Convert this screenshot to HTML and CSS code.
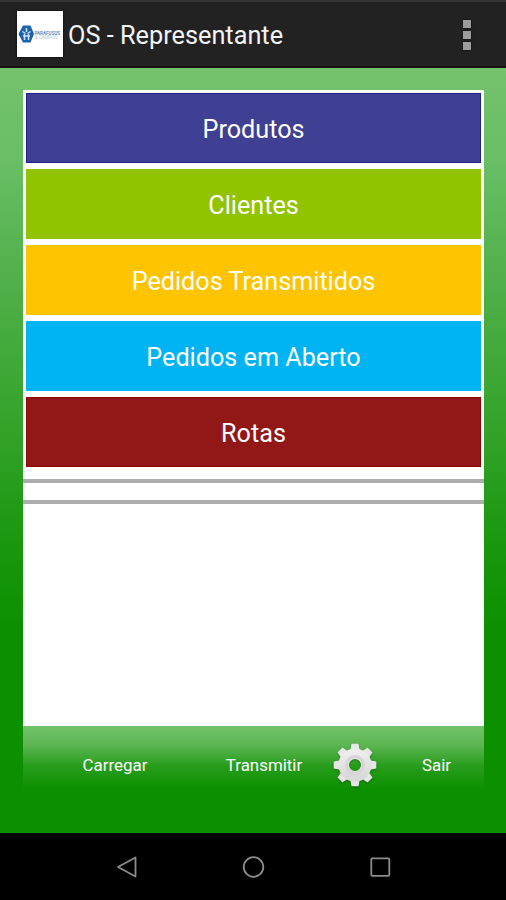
FILE: index.html
```
<!DOCTYPE html>
<html lang="pt-BR">
<head>
    <meta charset="UTF-8">
    <meta name="viewport" content="width=device-width, initial-scale=1.0">
    <title>OS - Representante</title>
    <link rel="stylesheet" href="styles.css">
</head>
<body>
    <header class="action-bar">
        <svg class="logo" viewBox="0 0 46 46">
            <rect width="46" height="46" fill="#fff"/>
            <path d="M6 14.500h7.500L17 23l-3.500 8.500H6L1.500 23z" fill="#1c63ad"/>
            <path d="M9.500 17v4M5.500 20.500l3 2M13.500 20.500l-3 2M7.500 23v6M11.500 23v6M6 25h7" stroke="#cfe3f5" stroke-width="1.500" fill="none"/>
            <text class="logo-name" x="17.500" y="23.500">PARAFUSOS</text>
            <text class="logo-sub" x="18" y="28">&amp; CAMPOS</text>
        </svg>
        <h1>OS - Representante</h1>
        <button class="overflow" aria-label="Menu">
            <span></span>
            <span></span>
            <span></span>
        </button>
    </header>

    <main class="screen">
        <div class="panel">
            <nav class="menu">
                <button class="produtos">Produtos</button>
                <button class="clientes">Clientes</button>
                <button class="transmitidos">Pedidos Transmitidos</button>
                <button class="aberto">Pedidos em Aberto</button>
                <button class="rotas">Rotas</button>
            </nav>
            <hr>
            <hr>
        </div>
        <div class="toolbar">
            <button class="carregar">Carregar</button>
            <button class="transmitir">Transmitir</button>
            <button class="config" aria-label="Configurações">
                <svg class="gear" viewBox="-22 -22 44 44">
                    <defs>
                        <linearGradient id="metal" x1="0" y1="0" x2="0" y2="1">
                            <stop offset="0" stop-color="#ececec"/>
                            <stop offset="1" stop-color="#dadada"/>
                        </linearGradient>
                        <path id="tooth" d="M-5-13L-3.500-21.300h7L5-13z"/>
                    </defs>
                    <g fill="#e6e6e6">
                        <use href="#tooth"/>
                        <use href="#tooth" transform="rotate(45)"/>
                        <use href="#tooth" transform="rotate(90)"/>
                        <use href="#tooth" transform="rotate(135)"/>
                        <use href="#tooth" transform="rotate(180)"/>
                        <use href="#tooth" transform="rotate(225)"/>
                        <use href="#tooth" transform="rotate(270)"/>
                        <use href="#tooth" transform="rotate(315)"/>
                    </g>
                    <circle r="11.250" fill="none" stroke="url(#metal)" stroke-width="10.500"/>
                    <circle r="8.500" fill="none" stroke="#d6d6d6" stroke-width="3"/>
                </svg>
            </button>
            <button class="sair">Sair</button>
        </div>
    </main>

    <footer class="nav-bar">
        <svg viewBox="0 0 24 24"><path d="M21.500 2.500v19L4 12z"/></svg>
        <svg viewBox="0 0 24 24"><circle cx="12.500" cy="12" r="9.800"/></svg>
        <svg viewBox="0 0 24 24"><rect x="3.300" y="3.300" width="18" height="17.500" rx="1"/></svg>
    </footer>
</body>
</html>
```

FILE: styles.css
```
:root {
    --green-light: #74c26b;
    --green: #0d9000;
    --bar: #222222;
}

* {
    margin: 0;
    padding: 0;
    box-sizing: border-box;
    font-family: Roboto, 'Liberation Sans', sans-serif;
}

body {
    display: flex;
    flex-direction: column;
    height: 900px;
    overflow: hidden;
    background: #000;
}

button {
    border: none;
    background: none;
    color: #fff;
    cursor: pointer;
}

.action-bar {
    display: flex;
    align-items: center;
    height: 68px;
    padding: 1px 35px 0 17px;
    background: var(--bar);
    border-top: 2px solid #363636;
    border-bottom: 2px solid #171212;
}

.logo {
    width: 46px;
    height: 46px;
    margin-bottom: 1px;
    box-shadow: 0 0 2px #000;
}

.logo-name {
    font-size: 4.500px;
    font-weight: 700;
    fill: #5e93c4;
}

.logo-sub {
    font-size: 4.500px;
    fill: #b3c6d8;
}

h1 {
    flex: 1;
    margin-left: 5px;
    padding-top: 2px;
    font-size: 25.300px;
    font-weight: 400;
    color: #f3f3f3;
}

.overflow {
    display: flex;
    flex-direction: column;
    gap: 3px;
}

.overflow span {
    width: 8px;
    height: 8px;
    background: #9c9c9c;
    box-shadow: 0 0 2px #000;
}

.screen {
    display: flex;
    flex-direction: column;
    height: 765px;
    padding: 22px 22px 0 23px;
    background: linear-gradient(#74c26b, #69be66 12%, #4dae46 30%, #2fa125 50%, #1a970f 62%, var(--green) 73%);
}

.panel {
    height: 636px;
    padding-top: 3px;
    background: #fff;
}

.menu {
    display: grid;
    gap: 6px;
    padding: 0 3px;
    margin-bottom: 12px;
}

.menu button {
    height: 70px;
    font-size: 25.200px;
    padding-top: 2px;
}

.produtos {
    background: #3f3f94;
    box-shadow: inset 0 0 0 1px #1f1f8e;
}

.clientes {
    background: #91c300;
}

.transmitidos {
    background: #ffc400;
}

.aberto {
    background: #00b3f3;
}

.rotas {
    background: #921818;
    box-shadow: inset 0 0 0 1px #8a0505;
}

hr {
    height: 4px;
    margin-bottom: 17px;
    border: none;
    background: #adadad;
}

.toolbar {
    display: flex;
    height: 77px;
}

.toolbar button {
    font-size: 16.900px;
    background: linear-gradient(var(--green-light), #5cb552 25%, #279d1c 52%, var(--green) 82%);
}

.carregar {
    width: 184px;
}

.transmitir {
    width: 114px;
}

.config {
    width: 68px;
}

.sair {
    flex: 1;
}

.gear {
    display: block;
    width: 44px;
    height: 44px;
    margin: 0 auto;
    filter: drop-shadow(0 1px 1px rgba(0, 0, 0, 0.3));
}

.nav-bar {
    display: flex;
    justify-content: center;
    align-items: center;
    gap: 103px;
    flex: 1;
    background: #000;
}

.nav-bar svg {
    width: 24px;
    height: 24px;
    fill: none;
    stroke: #8c8c8c;
    stroke-width: 1.800;
    stroke-linejoin: round;
}
```
